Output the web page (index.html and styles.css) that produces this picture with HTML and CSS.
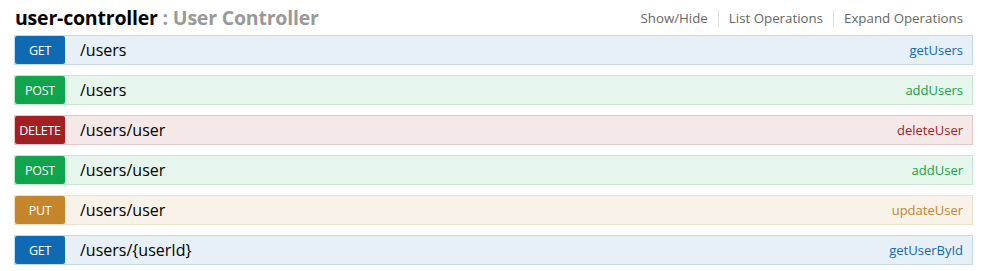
FILE: index.html
```html
<!DOCTYPE html>
<html>
<head>
<meta charset="utf-8">
<link rel="stylesheet" href="styles.css">
</head>
<body>
<div class="resource">
  <div class="heading">
    <h2 class="title"><span class="name">user-controller</span><span class="desc"> : User Controller</span></h2>
    <ul class="options">
      <li>Show/Hide</li>
      <li>List Operations</li>
      <li>Expand Operations</li>
    </ul>
  </div>
  <ul class="ops">
    <li class="op get"><span class="method">GET</span><span class="path">/users</span><span class="nick">getUsers</span></li>
    <li class="op post"><span class="method">POST</span><span class="path">/users</span><span class="nick">addUsers</span></li>
    <li class="op delete"><span class="method">DELETE</span><span class="path">/users/user</span><span class="nick">deleteUser</span></li>
    <li class="op post"><span class="method">POST</span><span class="path">/users/user</span><span class="nick">addUser</span></li>
    <li class="op put"><span class="method">PUT</span><span class="path">/users/user</span><span class="nick">updateUser</span></li>
    <li class="op get"><span class="method">GET</span><span class="path">/users/{userId}</span><span class="nick">getUserById</span></li>
  </ul>
</div>
</body>
</html>
```
FILE: styles.css
```css
* { box-sizing: border-box; }
body {
  margin: 0;
  background: #fff;
  font-family: "Open Sans", "Noto Sans", sans-serif;
}
.resource {
  padding: 0 18px 0 14px;
}
.heading {
  display: flex;
  align-items: center;
  justify-content: space-between;
  height: 35px;
}
.title {
  margin: 0 0 0 1px;
  font-size: 19.5px;
  font-weight: 700;
  color: #000;
  letter-spacing: -0.2px;
}
.title .desc { color: #999; }
.options {
  display: flex;
  list-style: none;
  margin: 0;
  padding: 0 10px 0 0;
  font-size: 13.3px;
  color: #666;
}
.options li {
  padding: 0 10px;
  border-left: 1px solid #ddd;
  line-height: 16px;
}
.options li:first-child { border-left: none; }
.options li:last-child { padding-right: 0; }
.ops {
  list-style: none;
  margin: 0;
  padding: 0;
  display: flex;
  flex-direction: column;
  gap: 10px;
}
.op {
  display: flex;
  align-items: center;
  height: 30px;
  border: 1px solid;
  padding-right: 9px;
}
.method {
  width: 50px;
  height: 28px;
  border-radius: 2px;
  color: #fff;
  font-size: 12.5px;
  display: flex;
  align-items: center;
  justify-content: center;
  letter-spacing: -0.3px;
}
.path {
  flex: 1;
  padding-left: 15px;
  font-size: 16px;
  color: #000;
}
.nick {
  font-size: 13px;
}
.get { background: #e7f0f7; border-color: #c3d9ec; }
.get .method { background: #0f6ab4; }
.get .nick { color: #0f6ab4; }
.post { background: #e7f6ec; border-color: #c3e8d1; }
.post .method { background: #10a54a; }
.post .nick { color: #10a54a; }
.delete { background: #f5e8e8; border-color: #e8c6c7; }
.delete .method { background: #a41e22; }
.delete .nick { color: #a41e22; }
.put { background: #f9f2e9; border-color: #f0e0ca; }
.put .method { background: #c5862b; }
.put .nick { color: #c5862b; }
```
